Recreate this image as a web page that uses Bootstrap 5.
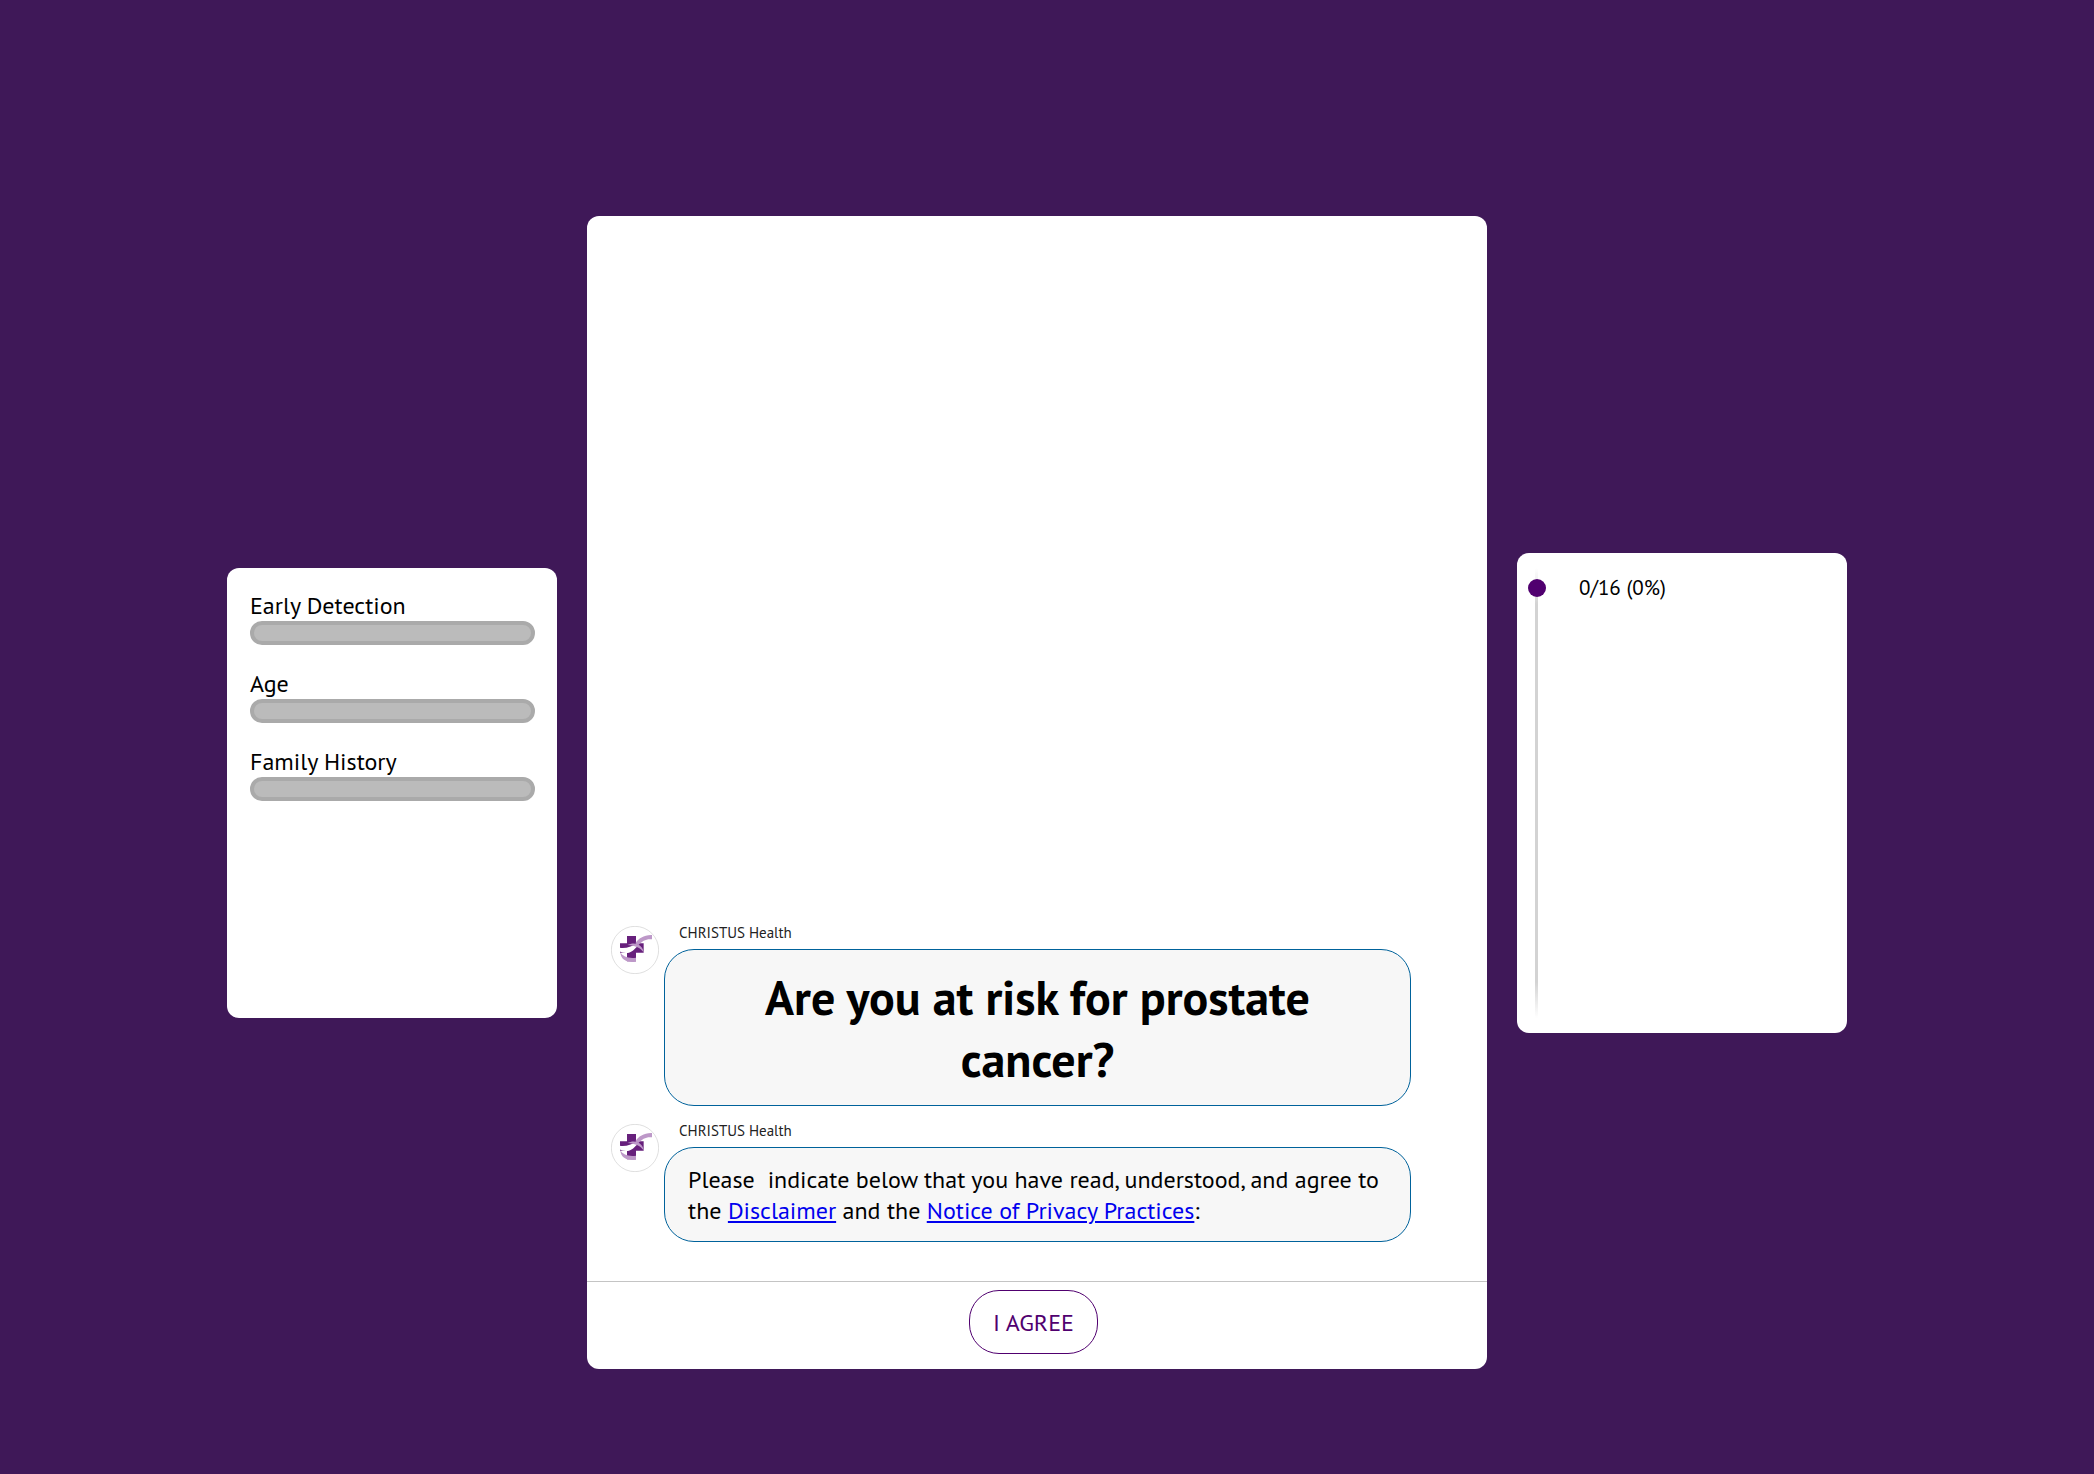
<!DOCTYPE html>
<html lang="en">
<head>
<meta charset="utf-8">
<meta name="viewport" content="width=device-width, initial-scale=1">
<title>CHRISTUS Health - Prostate Cancer Risk</title>
<link href="https://cdn.jsdelivr.net/npm/bootstrap@5.3.0/dist/css/bootstrap.min.css" rel="stylesheet">
<style>
body { background: #3f1858; color: #000; font-family: "PT Sans", "Noto Sans", sans-serif; font-size: 24px; line-height: 31px; }
.quiz { gap: 30px; padding: 216px 20px 105px 0; }
.panel { background: #fff; border-radius: 12px; }
.side { flex: 0 1 330px; }
.topics { min-height: 450px; padding: 22px 22px 22px 23px; }
.topic { margin-bottom: 23px; }
.topic .progress { height: 24px; border: 4px solid #aaa; border-radius: 12px; background: #bbb; }
.steps { min-height: 480px; padding: 15px 11px; }
.rail { width: 18px; background: linear-gradient(transparent, #d3d3d3 8%, #d3d3d3 92%, transparent) 7px 0 / 3px 100% no-repeat; }
.dot { width: 18px; height: 18px; margin-top: 11px; border-radius: 50%; background: #50006f; }
.count { margin: 4px 0 0 33px; font-size: 21px; }
.chat { flex: 0 1 900px; }
.messages { gap: 18px; padding: 24px 76px 39px 24px; }
.message { gap: 5px; }
.avatar { width: 48px; height: 48px; }
.sender { padding-left: 15px; font-size: 15px; line-height: 23px; margin-top: -5px; padding-bottom: 5px; color: #222; }
.bubble { padding: 16px 23px 15px; border: 1px solid #00629b; border-radius: 30px; background: #f7f7f7; }
.bubble h1 { font-size: 48px; line-height: 62px; font-weight: 700; }
.bubble a { color: #00e; }
.answers { border-top: 1px solid #c4c4c4; padding: 8px 7px 15px 0; }
.agree { padding: 16px 23px 14px; border: 1px solid #50006f; border-radius: 30px; color: #50006f; font-size: 24px; line-height: 32px; }
.agree:hover { background: #50006f; color: #fff; }
</style>
<script src="https://cdn.jsdelivr.net/npm/bootstrap@5.3.0/dist/js/bootstrap.bundle.min.js" defer></script>
</head>
<body>
<svg class="d-none" aria-hidden="true">
  <symbol id="logo" viewBox="33 27 144 144">
    <circle cx="105" cy="99" r="71" fill="#fff" stroke="#d8d8d8" stroke-width="2.5"/>
    <path d="M81 57h27v22h23v28h-23v26H81v-26H60V79h21z" fill="#67207c"/>
    <path d="M59 92c20 4 34-6 50-9l6 5c-10 3-14 16-28 19-12 2-22 0-28-4z" fill="#fff"/>
    <path d="M156 54v13c-18-2-29 5-41 17l-9-5c10-15 26-26 50-25z" fill="#bd98c8"/>
    <path d="M82 84c14-7 29-6 38 2 7 6 11 13 11 20-9-12-24-21-49-22z" fill="#bd98c8"/>
    <path d="M61 106c7 13 25 19 47 16v12c-25 5-46-5-47-28z" fill="#bd98c8"/>
  </symbol>
</svg>
<main class="quiz d-flex justify-content-center min-vh-100">
  <aside class="panel side topics align-self-center" aria-label="Topics">
    <div class="topic">
      <div id="topic-detection">Early Detection</div>
      <div class="progress" role="progressbar" aria-labelledby="topic-detection" aria-valuenow="0" aria-valuemin="0" aria-valuemax="100"><div class="progress-bar" style="width: 0%"></div></div>
    </div>
    <div class="topic">
      <div id="topic-age">Age</div>
      <div class="progress" role="progressbar" aria-labelledby="topic-age" aria-valuenow="0" aria-valuemin="0" aria-valuemax="100"><div class="progress-bar" style="width: 0%"></div></div>
    </div>
    <div class="topic">
      <div id="topic-family">Family History</div>
      <div class="progress" role="progressbar" aria-labelledby="topic-family" aria-valuenow="0" aria-valuemin="0" aria-valuemax="100"><div class="progress-bar" style="width: 0%"></div></div>
    </div>
  </aside>

  <section class="panel chat d-flex flex-column" aria-label="Conversation">
    <div class="messages d-flex flex-column justify-content-end flex-grow-1">
      <div class="message d-flex align-items-start">
        <svg class="avatar flex-shrink-0" role="img" aria-label="CHRISTUS Health logo"><use href="#logo"/></svg>
        <div class="flex-grow-1">
          <div class="sender">CHRISTUS Health</div>
          <div class="bubble"><h1 class="m-0 text-center">Are you at risk for prostate cancer?</h1></div>
        </div>
      </div>
      <div class="message d-flex align-items-start">
        <svg class="avatar flex-shrink-0" role="img" aria-label="CHRISTUS Health logo"><use href="#logo"/></svg>
        <div class="flex-grow-1">
          <div class="sender">CHRISTUS Health</div>
          <div class="bubble">Please &nbsp;indicate below that you have read, understood, and agree to the <a href="#disclaimer">Disclaimer</a> and the <a href="#privacy">Notice of Privacy Practices</a>:</div>
        </div>
      </div>
    </div>
    <div class="answers d-flex justify-content-center">
      <button type="button" class="btn agree">I AGREE</button>
    </div>
  </section>

  <aside class="panel side steps align-self-center d-flex" aria-label="Progress">
    <div class="rail"><div class="dot"></div></div>
    <div class="count">0/16 (0%)</div>
  </aside>
</main>
</body>
</html>
